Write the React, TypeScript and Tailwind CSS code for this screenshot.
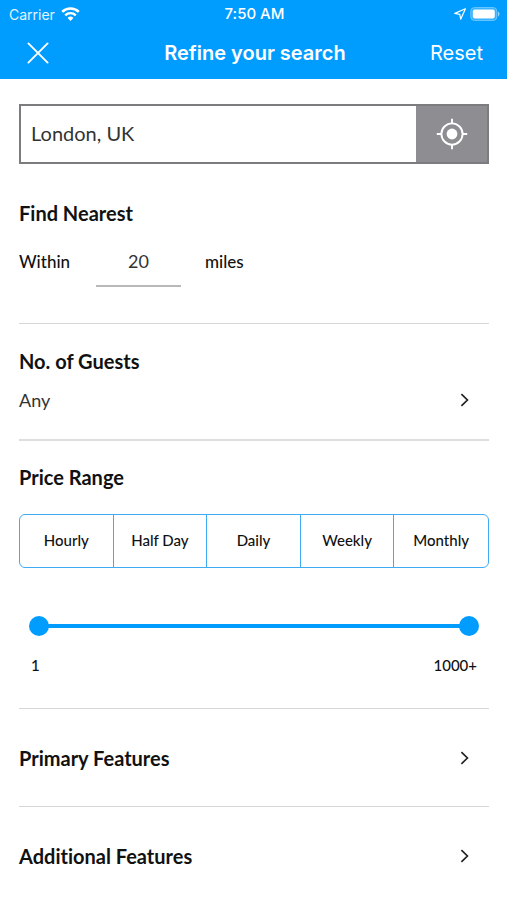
import { useState } from "react";
import type { ReactNode } from "react";

const PERIODS = ["Hourly", "Half Day", "Daily", "Weekly", "Monthly"];

const PRICE_MIN = 1;
const PRICE_MAX = 1000;

function WifiIcon() {
  return (
    <svg className="h-[15px] w-[19px]" viewBox="0 0 19 15" fill="none" aria-hidden="true">
      <path d="M1.2 4.9a12 12 0 0 1 16.6 0" stroke="currentColor" strokeWidth="2.6" />
      <path d="M4.2 8.3a7.6 7.6 0 0 1 10.6 0" stroke="currentColor" strokeWidth="2.4" />
      <path d="M9.5 14 6.6 11a4.1 4.1 0 0 1 5.8 0Z" fill="currentColor" />
    </svg>
  );
}

function LocationArrowIcon() {
  return (
    <svg className="h-3 w-3" viewBox="0 0 12 12" fill="none" aria-hidden="true">
      <path
        d="M11.4.8.8 5.4l5 .9.9 4.9L11.4.8Z"
        stroke="currentColor"
        strokeWidth="1.2"
        strokeLinejoin="round"
      />
    </svg>
  );
}

function BatteryIcon() {
  return (
    <svg className="h-[14px] w-[30px]" viewBox="0 0 30 14" aria-hidden="true">
      <rect x="0.8" y="0.6" width="26" height="12.8" rx="3.6" fill="#33b1ff" stroke="#70c8ff" strokeWidth="1" />
      <rect x="2.8" y="2.6" width="22" height="8.8" rx="1.8" fill="#fff" />
      <path d="M28 4.6c2 .8 2 4 0 4.8Z" fill="#8fd3ff" />
    </svg>
  );
}

function CloseIcon() {
  return (
    <svg className="h-[22px] w-[22px]" viewBox="0 0 22 22" fill="none" aria-hidden="true">
      <path d="m1.4 1.4 19.2 19.2M20.6 1.4 1.4 20.6" stroke="currentColor" strokeWidth="1.9" strokeLinecap="round" />
    </svg>
  );
}

function TargetIcon() {
  return (
    <svg className="h-8 w-8" viewBox="0 0 32 32" fill="none" aria-hidden="true">
      <circle cx="16" cy="16" r="10.6" stroke="currentColor" strokeWidth="1.9" />
      <circle cx="16" cy="16" r="5.4" fill="currentColor" />
      <path d="M16 .8v4.6M16 26.6v4.6M.8 16h4.6M26.6 16h4.6" stroke="currentColor" strokeWidth="1.9" />
    </svg>
  );
}

function ChevronIcon() {
  return (
    <svg className="mr-5 h-[14px] w-[9px] text-[#222]" viewBox="0 0 9 14" fill="none" aria-hidden="true">
      <path d="m1.4 1.2 6 5.8-6 5.8" stroke="currentColor" strokeWidth="1.7" />
    </svg>
  );
}

function Heading({ children }: { children: ReactNode }) {
  return <h2 className="text-[20px] leading-7 font-bold text-[#111]">{children}</h2>;
}

const RANGE_CLASS =
  "pointer-events-none col-start-1 row-start-1 h-5 w-full appearance-none bg-transparent [&::-webkit-slider-thumb]:pointer-events-auto [&::-webkit-slider-thumb]:h-5 [&::-webkit-slider-thumb]:w-5 [&::-webkit-slider-thumb]:appearance-none [&::-webkit-slider-thumb]:rounded-full [&::-webkit-slider-thumb]:bg-[#009dff]";

export default function App() {
  const [place, setPlace] = useState("London, UK");
  const [radius, setRadius] = useState("20");
  const [period, setPeriod] = useState<string | null>(null);
  const [low, setLow] = useState(PRICE_MIN);
  const [high, setHigh] = useState(PRICE_MAX);

  return (
    <div className="bg-white font-['Lato',sans-serif] text-[#111] [font-variant-ligatures:none]">
      <header className="bg-[#009dff] font-['Inter',sans-serif] text-white">
        <div className="grid h-7 grid-cols-3 items-center pr-[7px] pl-[9px]">
          <div className="flex items-center gap-1.5 text-[14px] text-[#e3f4ff]">
            Carrier
            <span className="text-white">
              <WifiIcon />
            </span>
          </div>
          <div className="text-center text-[15px] font-medium">7:50 AM</div>
          <div className="flex items-center justify-end gap-1">
            <LocationArrowIcon />
            <BatteryIcon />
          </div>
        </div>
        <div className="grid h-[51px] grid-cols-[1fr_auto_1fr] items-center pr-6 pb-0.5 pl-[27px]">
          <button type="button" aria-label="Close" className="justify-self-start">
            <CloseIcon />
          </button>
          <h1 className="text-[20px] font-semibold">Refine your search</h1>
          <button type="button" className="justify-self-end text-[20px]">
            Reset
          </button>
        </div>
      </header>

      <main className="pt-[25px] pr-[18px] pl-[19px]">
        <section className="border-b border-[#d6d6d6] pb-9">
          <div className="flex h-[60px] border-2 border-[#7c7c7f]">
            <input
              type="text"
              aria-label="Location"
              value={place}
              onChange={(e) => setPlace(e.target.value)}
              className="min-w-0 flex-1 px-[10px] pb-0.5 text-[20px] text-[#333] outline-none"
            />
            <button
              type="button"
              aria-label="Use current location"
              className="flex w-[71px] items-center justify-center bg-[#8e8d92] text-white"
            >
              <TargetIcon />
            </button>
          </div>
          <div className="mt-[35px]">
            <Heading>Find Nearest</Heading>
          </div>
          <div className="mt-[10px] flex h-[50px] items-center text-[17px] font-medium">
            <label htmlFor="radius" className="w-[77px]">
              Within
            </label>
            <input
              id="radius"
              type="text"
              inputMode="numeric"
              value={radius}
              onChange={(e) => setRadius(e.target.value)}
              className="h-full w-[85px] border-b-2 border-[#b8b8b8] text-center text-[18px] font-normal text-[#333] outline-none"
            />
            <span className="ml-6">miles</span>
          </div>
        </section>

        <section className="border-b-2 border-[#dedede] pt-[23px] pb-[14px]">
          <Heading>No. of Guests</Heading>
          <button
            type="button"
            className="flex h-[50px] w-full items-center justify-between text-[18px] text-[#333]"
          >
            Any
            <ChevronIcon />
          </button>
        </section>

        <section className="border-b border-[#d6d6d6] pt-[22px] pb-[31px]">
          <Heading>Price Range</Heading>
          <div
            role="group"
            aria-label="Price period"
            className="mt-[23px] grid h-[54px] grid-cols-5 divide-x divide-[#3fabf5] overflow-hidden rounded-md border border-[#3fabf5]"
          >
            {PERIODS.map((name) => (
              <button
                key={name}
                type="button"
                aria-pressed={period === name}
                onClick={() => setPeriod(name)}
                className="pb-0.5 text-[15px] font-medium aria-pressed:bg-[#e5f5ff]"
              >
                {name}
              </button>
            ))}
          </div>
          <div className="mx-[10px] mt-12 grid items-center">
            <div className="col-start-1 row-start-1 mx-[10px] h-1 bg-[#009dff]" />
            <input
              type="range"
              aria-label="Minimum price"
              min={PRICE_MIN}
              max={PRICE_MAX}
              value={low}
              onChange={(e) => setLow(Math.min(Number(e.target.value), high))}
              className={RANGE_CLASS}
            />
            <input
              type="range"
              aria-label="Maximum price"
              min={PRICE_MIN}
              max={PRICE_MAX}
              value={high}
              onChange={(e) => setHigh(Math.max(Number(e.target.value), low))}
              className={RANGE_CLASS}
            />
          </div>
          <div className="mx-3 mt-[17px] flex justify-between text-[15px] leading-6 font-medium">
            <span>{low}</span>
            <span>{high === PRICE_MAX ? "1000+" : high}</span>
          </div>
        </section>

        {["Primary Features", "Additional Features"].map((title) => (
          <section
            key={title}
            className="border-b border-[#d6d6d6] pt-[35px] pb-[34px] last:border-b-0 last:pb-0"
          >
            <button type="button" className="flex w-full items-center justify-between">
              <Heading>{title}</Heading>
              <ChevronIcon />
            </button>
          </section>
        ))}
      </main>
    </div>
  );
}
